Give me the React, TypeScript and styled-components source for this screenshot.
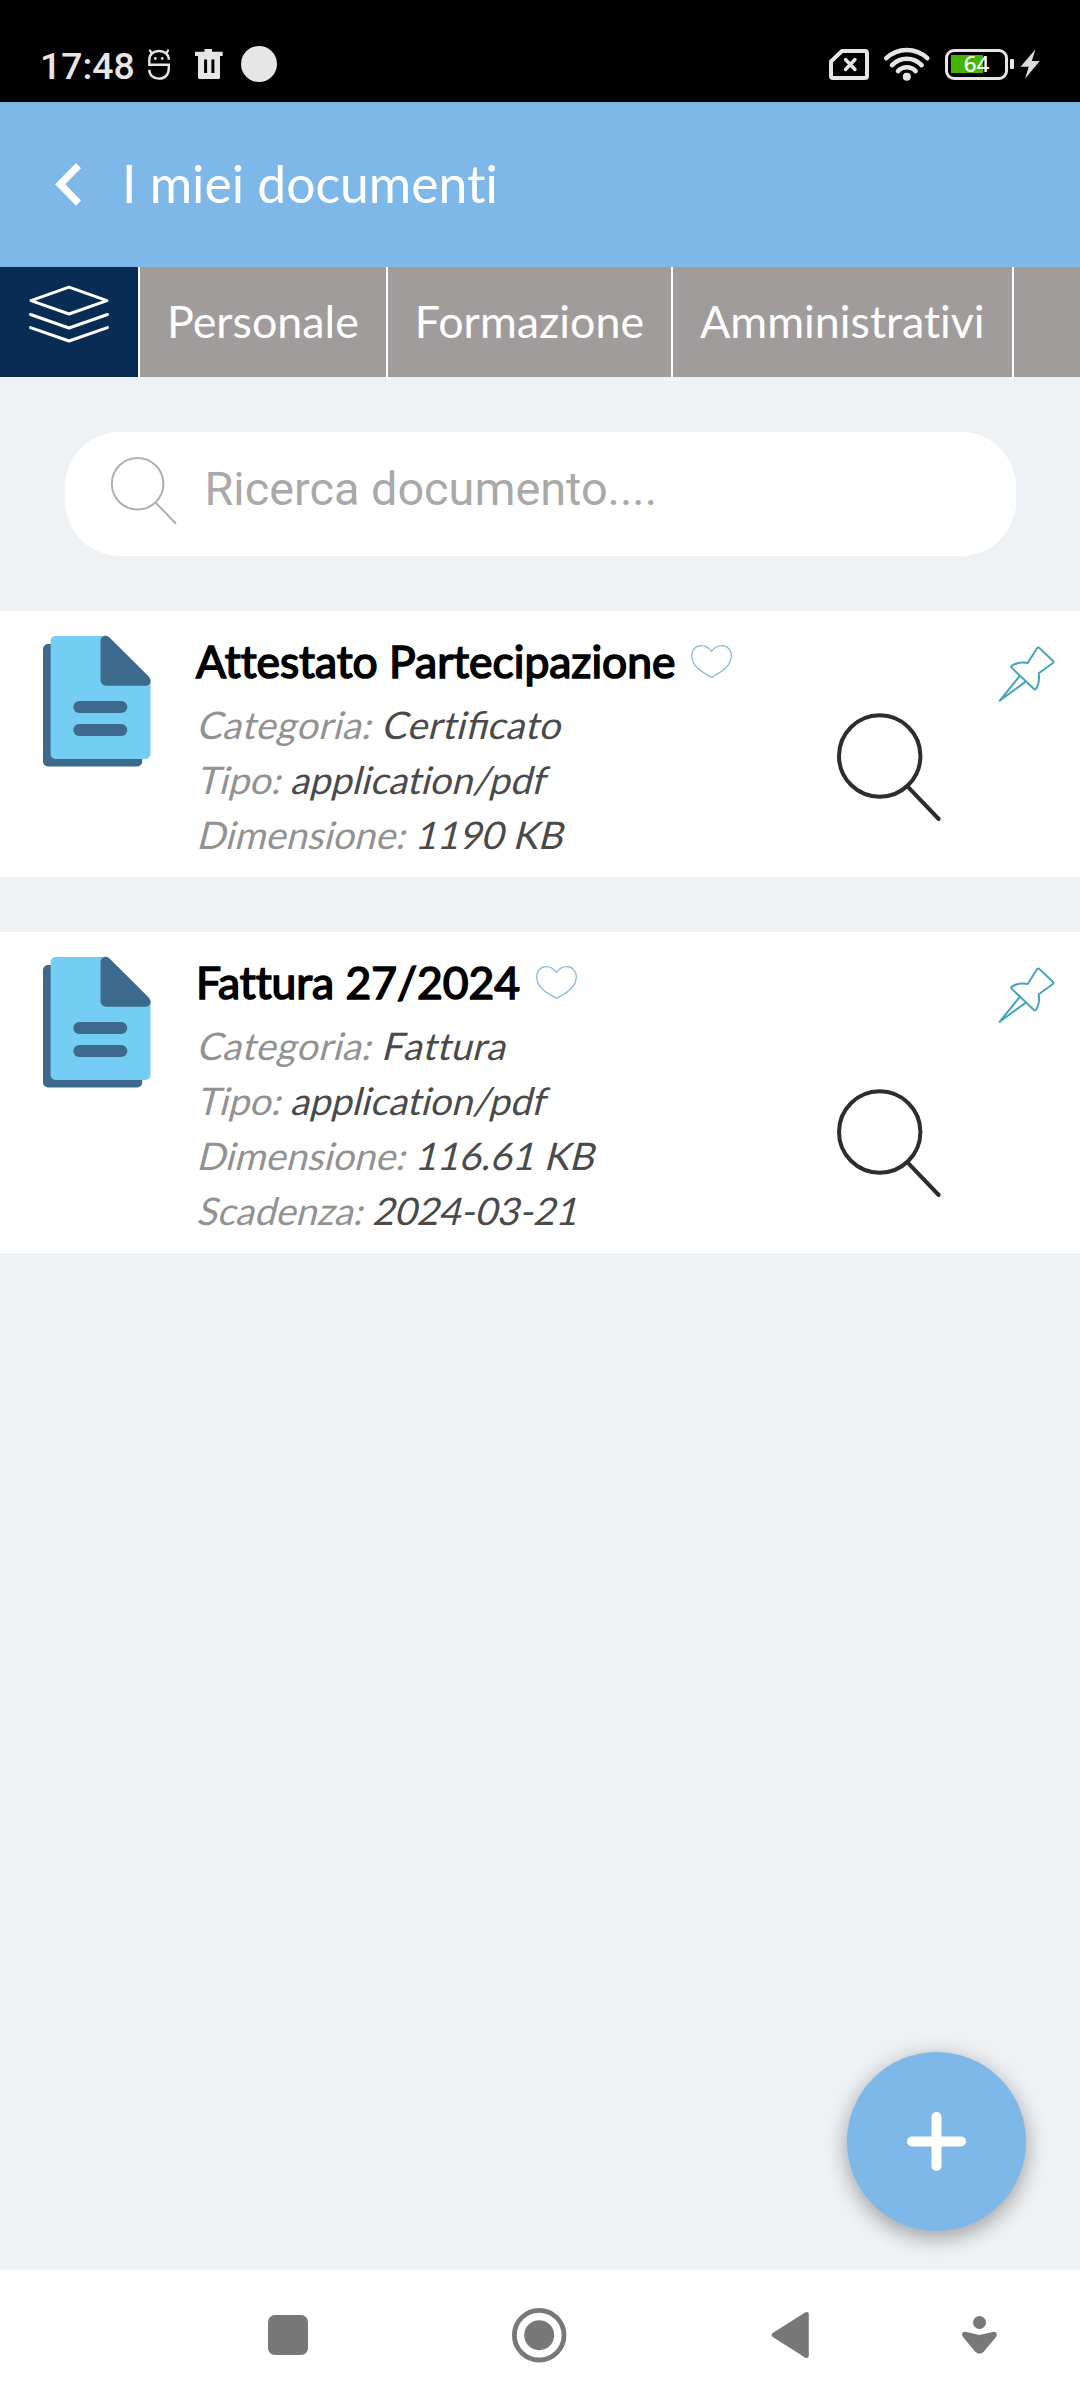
import React from "react";
import styled, { createGlobalStyle } from "styled-components";

const GlobalStyle = createGlobalStyle`
  * { box-sizing: border-box; }
  body { margin: 0; background: #eef2f5; }
`;

const Screen = styled.div`
  position: relative;
  width: 1080px;
  height: 2400px;
  display: flex;
  flex-direction: column;
  overflow: hidden;
  background: #eef2f5;
  font-family: Lato, "Noto Sans", sans-serif;
  font-variant-ligatures: none;
`;

const Icon = styled.svg`
  display: block;
  flex: none;
  overflow: visible;
`;

/* Status bar */

const StatusBar = styled.div`
  flex: none;
  height: 102px;
  padding: 26px 40px 0 40px;
  display: flex;
  align-items: center;
  justify-content: space-between;
  background: #000;
  color: #e6e6e6;
`;

const StatusGroup = styled.div`
  display: flex;
  align-items: center;
`;

const Clock = styled.span`
  font: 500 37.3px/44px Roboto, sans-serif;
  width: 108px;
  padding-top: 3px;
`;

const NotificationIcons = styled.div`
  display: flex;
  align-items: center;
`;

const TrashSlot = styled.div`
  margin: 0 18px 0 25px;
`;

const NotificationDot = styled.span`
  width: 36px;
  height: 36px;
  border-radius: 50%;
  background: #e6e6e6;
`;

const SignalIcons = styled.div`
  display: flex;
  align-items: center;
  gap: 15px;
`;

const Battery = styled.div`
  display: flex;
  align-items: center;
`;

const BatteryCase = styled.div`
  width: 63px;
  height: 31px;
  border: 3.5px solid #e6e6e6;
  border-radius: 9px;
  display: flex;
  align-items: center;
  justify-content: center;
  background: linear-gradient(#46b400, #46b400) 3px 50% / 32px 18px no-repeat;
  color: #fff;
  font: 500 22.5px/24px "Noto Sans", sans-serif;
`;

const BatteryNub = styled.span`
  width: 4px;
  height: 10px;
  margin: 0 6px 0 2px;
  border-radius: 1px;
  background: #e6e6e6;
`;

/* Header */

const Header = styled.header`
  flex: none;
  height: 165px;
  padding-left: 55px;
  display: flex;
  align-items: center;
  gap: 41px;
  background: #7db8e8;
  color: #fff;
`;

const Title = styled.h1`
  margin: 0 0 3px;
  font-size: 51.6px;
  font-weight: 400;
  line-height: 62px;
`;

const Tabs = styled.nav`
  flex: none;
  height: 110px;
  display: flex;
  gap: 2px;
  background: #fff;
`;

const Tab = styled.div<{ $active?: boolean }>`
  flex: none;
  padding: ${(p) => (p.$active ? "0 29px 16px" : "0 27px 2px")};
  display: flex;
  align-items: center;
  background: ${(p) => (p.$active ? "#082c54" : "#a09c9b")};
  color: #fff;
  font-size: 44.8px;
  line-height: 54px;
`;

const TabRemainder = styled.div`
  flex: 1;
  background: #a09c9b;
`;

/* Search */

const SearchBox = styled.div`
  flex: none;
  height: 124px;
  margin: 55px 64.5px;
  padding: 0 45px 8px;
  display: flex;
  align-items: center;
  gap: 28px;
  border-radius: 55px;
  background: #fff;
`;

const SearchInput = styled.input`
  flex: 1;
  min-width: 0;
  height: 60px;
  margin-bottom: 2px;
  padding: 0;
  border: 0;
  outline: 0;
  background: transparent;
  font: 400 46.8px/60px Roboto, sans-serif;
  &::placeholder { color: #a9a9a9; opacity: 1; }
`;

/* Documents */

const DocumentList = styled.main`
  flex: 1;
  display: flex;
  flex-direction: column;
  gap: 55px;
`;

const Card = styled.article`
  flex: none;
  padding: 22px 25px 15px 43px;
  display: flex;
  background: #fff;
`;

const DocumentThumb = styled.div`
  padding-top: 3px;
`;

const DocumentInfo = styled.div`
  flex: 1;
  margin-left: 45px;
  display: flex;
  flex-direction: column;
`;

const DocumentName = styled.h2`
  margin: 0 0 9px;
  display: flex;
  align-items: center;
  gap: 16px;
  color: #000;
  font-size: 44.4px;
  font-weight: 400;
  line-height: 55px;
  -webkit-text-stroke: 1.6px #000;
`;

const HeartSlot = styled.span`
  padding-top: 2px;
`;

const Detail = styled.div<{ $tracking: number }>`
  color: #4a4a4a;
  font-size: 38.1px;
  line-height: 55px;
  letter-spacing: ${(p) => p.$tracking}px;
  font-kerning: ${(p) => (p.$tracking > 0 ? "none" : "normal")};
  white-space: pre;
  transform: skewX(-14deg);
  transform-origin: 0 42px;
`;

const DetailLabel = styled.span`
  color: #929292;
`;

const Ligature = styled.span`
  font-variant-ligatures: common-ligatures;
  letter-spacing: 0;
`;

const OpenButton = styled.div`
  align-self: flex-end;
  margin: 0 58px 41px 0;
`;

const PinButton = styled.div`
  padding-top: 13px;
`;

/* Overlay and system navigation */

const AddButton = styled.button`
  position: absolute;
  right: 54px;
  bottom: 169px;
  width: 179px;
  height: 179px;
  padding: 0;
  border: 0;
  border-radius: 50%;
  display: flex;
  align-items: center;
  justify-content: center;
  background: #7db8e8;
  box-shadow: 0 8px 20px rgba(0, 0, 0, 0.24), 0 2px 26px rgba(0, 0, 0, 0.12);
`;

const NavigationBar = styled.footer`
  flex: none;
  height: 130px;
  padding: 0 83px 0 267.5px;
  display: flex;
  align-items: center;
  justify-content: space-between;
  background: #fff;
`;

const NavigationKeys = styled.div`
  display: flex;
  align-items: center;
  gap: 204.6px;
`;

const RecentsKey = styled.span`
  width: 40px;
  height: 40px;
  border-radius: 7px;
  background: #787878;
`;

const MagnifierIcon = () => (
  <Icon width="104" height="108" viewBox="837 713 104 108" fill="none" stroke="#2e2d2d" strokeWidth="4" strokeLinecap="round">
    <circle cx="879.7" cy="756" r="40.7" />
    <path d="M908.4 787.3L938.7 819" />
  </Icon>
);

const DocumentIcon = () => (
  <Icon width="108" height="131" viewBox="43 636 108 131">
    <path d="M48 644H62V750H142.200V761.5a5 5 0 0 1-5 5H48a5 5 0 0 1-5-5V649a5 5 0 0 1 5-5Z" fill="#3d6a8c" />
    <path d="M55.6 636H105L150.5 680V754a5 5 0 0 1-5 5H55.6a5 5 0 0 1-5-5V641a5 5 0 0 1 5-5Z" fill="#74cef3" />
    <path d="M100.5 641.5C100.500 636 106 634 109.500 637.5L148.500 676.200C152.500 680.500 150.500 685.700 145.500 685.700H106a5.500 5.500 0 0 1-5.500-5.500Z" fill="#3d6a8c" />
    <rect x="73.3" y="701" width="54" height="12" rx="6" fill="#3d6a8c" />
    <rect x="73.3" y="724" width="54" height="12" rx="6" fill="#3d6a8c" />
  </Icon>
);

const HeartIcon = () => (
  <Icon width="41" height="33" viewBox="0 0 41 33" fill="none" stroke="#86bcd3" strokeWidth="1.3" strokeLinejoin="round">
    <path d="M20.5 6.5C17.5 2 13.5.7 10 .7C4.5.7.7 5 .7 10.8C.7 21 10 26.8 20.5 32.3C31 26.8 40.3 21 40.3 10.8C40.3 5 36.5.7 31 .7C27.5.7 23.5 2 20.5 6.5Z" />
  </Icon>
);

const PinIcon = () => (
  <Icon width="56" height="56" viewBox="999 646 56 56" fill="none" stroke="#46a5b8" strokeWidth="2" strokeLinejoin="round" strokeLinecap="round">
    <path d="M1037 648.2Q1038.3 646.8 1039.6 648.1L1053 661Q1054 662.2 1052.6 663.2L1038.7 673.3Q1040 683 1035.8 689Q1035 690 1034 689L1011.5 667.6Q1010.6 666.7 1011.7 665.8Q1018 661.5 1027.7 663Z" />
    <path d="M1020 675.6L999.6 700.8L1025.7 681.6" />
  </Icon>
);

type DetailItem = { label: string; value: string; tracking?: number };
type DocumentItem = { name: string; details: DetailItem[] };

const documents: DocumentItem[] = [
  {
    name: "Attestato Partecipazione",
    details: [
      { label: "Categoria", value: "Certificato", tracking: 0.36 },
      { label: "Tipo", value: "application/pdf" },
      { label: "Dimensione", value: "1190 KB" },
    ],
  },
  {
    name: "Fattura 27/2024",
    details: [
      { label: "Categoria", value: "Fattura", tracking: 0.36 },
      { label: "Tipo", value: "application/pdf" },
      { label: "Dimensione", value: "116.61 KB" },
      { label: "Scadenza", value: "2024-03-21" },
    ],
  },
];

/* Only the "fi" pair is joined; every other pair stays separate. */
const DetailValue = ({ text }: { text: string }) => (
  <>{text.split(/(fi)/).map((part, i) => (part === "fi" ? <Ligature key={i}>{part}</Ligature> : part))}</>
);

export default function App() {
  return (
    <Screen>
      <GlobalStyle />
      <StatusBar>
        <StatusGroup>
          <Clock>17:48</Clock>
          <NotificationIcons>
            <Icon width="22" height="31" viewBox="0 0 22 31" fill="none" stroke="#e6e6e6" strokeWidth="2.4" strokeLinecap="round">
              <path d="M20.8 10.8C20.8 5 16.5 2 11 2S1.3 5 1.3 11V15.8H20.8V19.5C20.8 25.5 17 29.6 11 29.6S1.3 26 1.3 20.8" strokeLinecap="butt" />
              <path d="M3.5 4L2 1.5M18.5 4L20 1.5" />
              <path d="M7.3 9.5h.1M14.2 9.5h.1" strokeWidth="2.8" />
            </Icon>
            <TrashSlot>
              <Icon width="28" height="30" viewBox="195 49 28 30" fill="#e6e6e6">
                <path fillRule="evenodd" d="M204.5 51.8V49H212V51.8H222.7V56H220V77.5Q220 79 218.5 79H199.5Q198 79 198 77.5V56H195V51.8ZM204.1 59.5V73H207.100V59.5ZM211.400 59.5V73H214.400V59.5Z" />
              </Icon>
            </TrashSlot>
            <NotificationDot />
          </NotificationIcons>
        </StatusGroup>
        <SignalIcons>
          <Icon width="40" height="31" viewBox="829 50 40 31" fill="none" stroke="#e6e6e6" strokeWidth="4" strokeLinejoin="round" strokeLinecap="round">
            <path d="M842 52H865Q867 52 867 54V77Q867 79 865 79H833Q831 79 831 77V62.5Z" />
            <path d="M845.5 60.5L855 70.5M855 60.5L845.5 70.5" strokeWidth="3.4" />
          </Icon>
          <Icon width="46" height="34" viewBox="884 47.5 46 34" fill="none" stroke="#e6e6e6" strokeWidth="4.6" strokeLinecap="round">
            <path d="M886.3 58.7A29.7 29.7 0 0 1 927.3 58.7M892 65.6A20.5 20.5 0 0 1 921.6 65.6M898 71.6A12 12 0 0 1 915.6 71.6" />
            <circle cx="906.8" cy="77.3" r="4" fill="#e6e6e6" stroke="none" />
          </Icon>
          <Battery>
            <BatteryCase>64</BatteryCase>
            <BatteryNub />
            <Icon width="20" height="30" viewBox="1020.5 49.5 20 30" fill="#dcdcdc">
              <path d="M1036 49.7L1021 67.2H1029.2L1025.5 79.2L1040.3 61.5H1032.3Z" />
            </Icon>
          </Battery>
        </SignalIcons>
      </StatusBar>

      <Header>
        <Icon width="26" height="43" viewBox="55 164 26 43" fill="#fff">
          <path d="M76 164L81 169.2L65.3 185.3L81 201.5L76 206.7L55 185.3Z" />
        </Icon>
        <Title>I miei documenti</Title>
      </Header>

      <Tabs>
        <Tab $active>
          <Icon width="80" height="58" viewBox="29 285 80 58" fill="none" stroke="#fff" strokeWidth="3" strokeLinejoin="round" strokeLinecap="round">
            <path d="M31 300.6L69 287.2L107 300.6L69 314Z" />
            <path d="M30.5 314.5L69 328L107.5 314.5" />
            <path d="M30.5 327.6L69 341L107.5 327.6" />
          </Icon>
        </Tab>
        <Tab>Personale</Tab>
        <Tab>Formazione</Tab>
        <Tab>Amministrativi</Tab>
        <TabRemainder />
      </Tabs>

      <SearchBox>
        <Icon width="67" height="68" viewBox="110 456 67 68" fill="none" stroke="#b0b0b0" strokeWidth="2">
          <circle cx="137.6" cy="483.8" r="25.8" />
          <path d="M155.2 502.2L176 523.7" />
        </Icon>
        <SearchInput placeholder="Ricerca documento...." />
      </SearchBox>

      <DocumentList>
        {documents.map((doc) => (
          <Card key={doc.name}>
            <DocumentThumb>
              <DocumentIcon />
            </DocumentThumb>
            <DocumentInfo>
              <DocumentName>
                {doc.name}
                <HeartSlot>
                  <HeartIcon />
                </HeartSlot>
              </DocumentName>
              {doc.details.map(({ label, value, tracking = 0 }) => (
                <Detail key={label} $tracking={tracking}>
                  <DetailLabel>{label}: </DetailLabel>
                  <DetailValue text={value} />
                </Detail>
              ))}
            </DocumentInfo>
            <OpenButton>
              <MagnifierIcon />
            </OpenButton>
            <PinButton>
              <PinIcon />
            </PinButton>
          </Card>
        ))}
      </DocumentList>

      <AddButton aria-label="Aggiungi">
        <Icon width="59" height="59" viewBox="0 0 59 59" stroke="#fff" strokeWidth="10" strokeLinecap="round">
          <path d="M29.5 5V54M5 29.5H54" />
        </Icon>
      </AddButton>

      <NavigationBar>
        <NavigationKeys>
          <RecentsKey />
          <Icon width="54.4" height="54.4" viewBox="0 0 54.4 54.4">
            <circle cx="27.2" cy="27.2" r="24.8" fill="none" stroke="#787878" strokeWidth="4.8" />
            <circle cx="27.2" cy="27.2" r="15" fill="#787878" />
          </Icon>
          <Icon width="38" height="46" viewBox="771 2312 38 46" fill="#787878">
            <path d="M772.3 2333.3L805 2312.6Q808.8 2311 808.8 2314.5V2355.5Q808.8 2359 805 2357.4L772.3 2336.7Q770.5 2335 772.3 2333.3Z" />
          </Icon>
        </NavigationKeys>
        <Icon width="35" height="38" viewBox="962 2316 35 38" fill="#787878">
          <circle cx="979.5" cy="2322.5" r="6.5" />
          <path d="M966.5 2332L979.5 2335L992.5 2332C996.5 2331 998 2334.5 996 2337L983.5 2352Q979.5 2355.5 975.5 2352L963 2337C961 2334.5 962.5 2331 966.5 2332Z" />
        </Icon>
      </NavigationBar>
    </Screen>
  );
}
